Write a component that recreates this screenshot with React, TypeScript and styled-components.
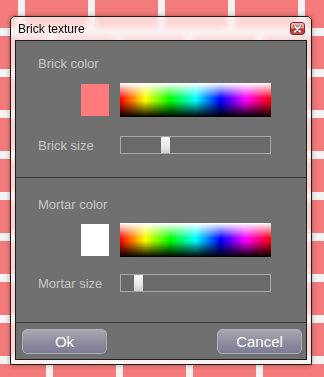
import React from "react";
import styled, { createGlobalStyle } from "styled-components";

const Global = createGlobalStyle`
  html, body { margin: 0; padding: 0; }
  body {
    width: 324px;
    height: 377px;
    overflow: hidden;
    font-family: "Liberation Sans", Arial, sans-serif;
  }
`;

const Desktop = styled.div`
  position: relative;
  width: 324px;
  height: 377px;
  box-sizing: border-box;
  padding: 16px 0 0 10px;
  overflow: hidden;
  background: #f47b7b;
`;

const Backdrop = styled.svg`
  position: absolute;
  left: 0;
  top: 0;
`;

const Window = styled.div`
  position: relative;
  width: 302px;
  height: 349px;
  box-sizing: border-box;
  border: 1px solid #1e1e1e;
  border-radius: 5px 5px 0 0;
  background: rgba(255, 246, 246, 0.72);
  backdrop-filter: blur(3px);
  padding: 0 4px 4px 4px;
  display: flex;
  flex-direction: column;
  box-shadow: 0 0 5px rgba(0, 0, 0, 0.35);
`;

const TitleBar = styled.div`
  height: 23px;
  display: flex;
  align-items: center;
  justify-content: space-between;
  padding: 0 2px 0 3px;
`;

const Title = styled.span`
  font-size: 12px;
  color: #000;
`;

const CloseButton = styled.div`
  width: 15px;
  height: 13px;
  box-sizing: border-box;
  border: 1px solid #7a2a2a;
  border-radius: 3px;
  background: linear-gradient(
    to bottom,
    #f2b9b4 0%,
    #e59a92 45%,
    #c8332b 55%,
    #d2463c 100%
  );
  display: flex;
  align-items: center;
  justify-content: center;
`;

const Content = styled.div`
  flex: 1;
  border: 1px solid #1a1a1a;
  background: #707070;
  display: flex;
  flex-direction: column;
`;

const Section = styled.div<{ $pt: number; $pb: number }>`
  display: grid;
  grid-template-columns: 82px 151px;
  padding: ${(p) => p.$pt}px 0 ${(p) => p.$pb}px 22px;
  border-bottom: 1px solid #3c3c3c;
`;

const Label = styled.div`
  grid-column: 1 / span 2;
  font-size: 13px;
  line-height: 15px;
  color: #c6c6c6;
  white-space: nowrap;
`;

const Swatch = styled.div<{ $color: string; $mt: number }>`
  justify-self: end;
  align-self: center;
  margin: ${(p) => p.$mt}px 11px 0 0;
  width: 28px;
  height: 32px;
  background: ${(p) => p.$color};
`;

const Spectrum = styled.div<{ $mt: number }>`
  margin-top: ${(p) => p.$mt}px;
  width: 151px;
  height: 34px;
  background:
    linear-gradient(
      to bottom,
      rgba(255, 255, 255, 1) 0%,
      rgba(255, 255, 255, 0) 45%,
      rgba(0, 0, 0, 0) 52%,
      rgba(0, 0, 0, 1) 100%
    ),
    linear-gradient(
      to right,
      #ff0000 0%,
      #ffff00 16.66%,
      #00ff00 33.33%,
      #00ffff 50%,
      #0000ff 66.66%,
      #ff00ff 83.33%,
      #ff0000 100%
    );
`;

const SizeLabel = styled.div<{ $mt: number }>`
  margin-top: ${(p) => p.$mt}px;
  align-self: center;
  font-size: 13px;
  line-height: 15px;
  color: #c6c6c6;
  white-space: nowrap;
`;

const Track = styled.div<{ $mt: number }>`
  margin-top: ${(p) => p.$mt}px;
  width: 151px;
  height: 18px;
  box-sizing: border-box;
  border: 1px solid #a8a8a8;
  background: #6a6a6a;
  display: flex;
`;

const Thumb = styled.div<{ $left: number }>`
  margin-left: ${(p) => p.$left}px;
  width: 9px;
  height: 100%;
  background: linear-gradient(to bottom, #fbfbfb 0%, #e6e6e6 60%, #cfcfcf 100%);
`;

const Footer = styled.div`
  flex: 1;
  display: flex;
  align-items: center;
  justify-content: space-between;
  padding: 0 4px 0 6px;
`;

const Button = styled.button`
  width: 85px;
  height: 25px;
  box-sizing: border-box;
  border: 1px solid #aeaeb8;
  border-radius: 5px;
  background: linear-gradient(to bottom, #a9a9b0 0%, #8e8ea0 50%, #7b7b97 100%);
  color: #ffffff;
  font-family: "Liberation Sans", Arial, sans-serif;
  font-size: 15px;
  padding: 0;
  line-height: 23px;
`;

function Bricks() {
  return (
    <Backdrop width={324} height={377} viewBox="0 0 324 377">
      <defs>
        <pattern id="brick" x="0" y="-5" width="70" height="82" patternUnits="userSpaceOnUse">
          <rect x="0" y="0" width="70" height="82" fill="#f47b7b" />
          <rect x="0" y="33" width="70" height="8" fill="#f3f3f3" />
          <rect x="0" y="74" width="70" height="8" fill="#f3f3f3" />
          <rect x="18" y="0" width="7" height="33" fill="#f3f3f3" />
          <rect x="46" y="41" width="7" height="33" fill="#f3f3f3" />
        </pattern>
      </defs>
      <rect x="0" y="0" width="324" height="377" fill="url(#brick)" />
    </Backdrop>
  );
}

export default function App() {
  return (
    <>
      <Global />
      <Desktop>
        <Bricks />
        <Window>
          <TitleBar>
            <Title>Brick texture</Title>
            <CloseButton>
              <svg width="9" height="8" viewBox="0 0 9 8">
                <path d="M1.5 1 L7.5 7 M7.5 1 L1.5 7" stroke="#5a1a1a" strokeWidth="3" strokeLinecap="round" />
                <path d="M1.5 1 L7.5 7 M7.5 1 L1.5 7" stroke="#ffffff" strokeWidth="1.8" strokeLinecap="round" />
              </svg>
            </CloseButton>
          </TitleBar>
          <Content>
            <Section $pt={15} $pb={23}>
              <Label>Brick color</Label>
              <Swatch $color="#ff7b7b" $mt={12} />
              <Spectrum $mt={12} />
              <SizeLabel $mt={19}>Brick size</SizeLabel>
              <Track $mt={19}>
                <Thumb $left={40} />
              </Track>
            </Section>
            <Section $pt={19} $pb={30}>
              <Label>Mortar color</Label>
              <Swatch $color="#ffffff" $mt={11} />
              <Spectrum $mt={11} />
              <SizeLabel $mt={17}>Mortar size</SizeLabel>
              <Track $mt={17}>
                <Thumb $left={13} />
              </Track>
            </Section>
            <Footer>
              <Button>Ok</Button>
              <Button>Cancel</Button>
            </Footer>
          </Content>
        </Window>
      </Desktop>
    </>
  );
}
